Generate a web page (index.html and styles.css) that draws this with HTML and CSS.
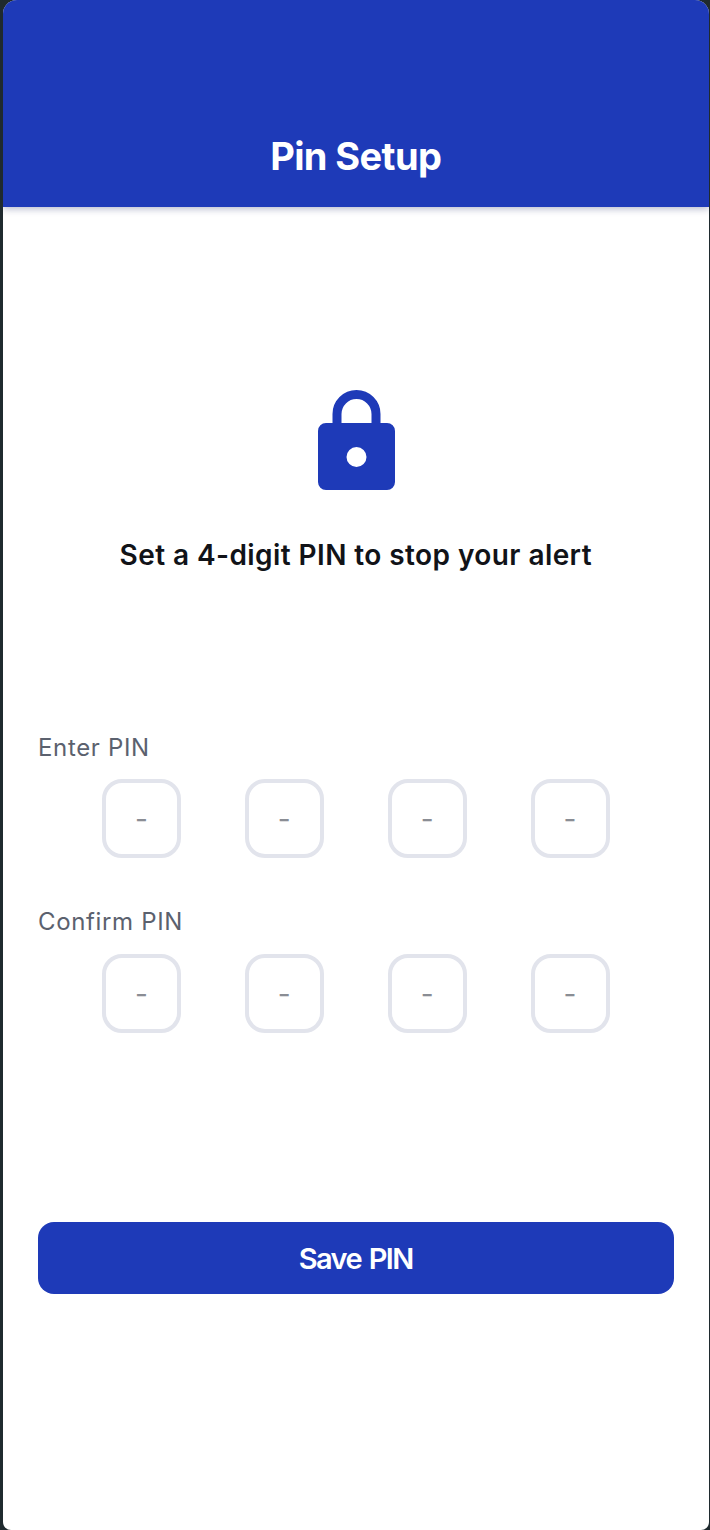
FILE: index.html
```html
<!DOCTYPE html>
<html lang="en">
<head>
<meta charset="utf-8">
<title>Pin Setup</title>
<link rel="stylesheet" href="styles.css">
</head>
<body>
<div class="screen">
  <header class="topbar"><h1 class="title">Pin Setup</h1></header>
  <main class="content">
    <section class="intro">
      <svg class="lock" width="77" height="101" viewBox="0 0 77 101" aria-hidden="true">
        <path class="lock-shackle" d="M19 38V24A19.500 19.500 0 0 1 58 24V38"/>
        <path class="lock-body" fill-rule="evenodd" d="M8 33H69A8 8 0 0 1 77 41V92A8 8 0 0 1 69 100H8A8 8 0 0 1 0 92V41A8 8 0 0 1 8 33ZM38.500 57A10 10 0 1 0 38.500 77A10 10 0 1 0 38.500 57Z"/>
      </svg>
      <p class="prompt">Set a 4-digit PIN to stop your alert</p>
    </section>
    <section class="pin-group pin-group-first">
      <div class="pin-label">Enter PIN</div>
      <div class="pin-row">
        <div class="pin-box">-</div><div class="pin-box">-</div><div class="pin-box">-</div><div class="pin-box">-</div>
      </div>
    </section>
    <section class="pin-group">
      <div class="pin-label">Confirm PIN</div>
      <div class="pin-row pin-row-last">
        <div class="pin-box">-</div><div class="pin-box">-</div><div class="pin-box">-</div><div class="pin-box">-</div>
      </div>
    </section>
    <button class="save" type="button">Save PIN</button>
  </main>
</div>
</body>
</html>
```

FILE: styles.css
```css
* { box-sizing: border-box; }
html, body { margin: 0; height: 100%; }
body {
  background: #1f2a2e;
  padding: 0 1px 0 2.5px;
  font-family: Inter, "Liberation Sans", sans-serif;
  overflow: hidden;
}
.screen {
  height: 1530px;
  background: #fff;
  border-radius: 14px 14px 8px 8px;
  overflow: hidden;
  display: flex;
  flex-direction: column;
}
.topbar {
  height: 207px;
  flex: none;
  background: #1e3ab8;
  box-shadow: 0 2px 7px rgba(30, 40, 100, 0.32);
  display: flex;
  align-items: flex-end;
  justify-content: center;
  padding-bottom: 28px;
}
.title {
  margin: 0;
  color: #fff;
  font-size: 38px;
  line-height: 46px;
  font-weight: 700;
  letter-spacing: -0.6px;
}
.content {
  padding: 183px 35.500px 0;
  display: flex;
  flex-direction: column;
}
.intro {
  display: flex;
  flex-direction: column;
  align-items: center;
}
.lock { display: block; margin-left: 1px; }
.lock-shackle { fill: none; stroke: #1e3ab8; stroke-width: 9; }
.lock-body { fill: #1e3ab8; }
.prompt {
  margin: 46px 0 0;
  color: #111318;
  font-size: 28px;
  line-height: 36px;
  font-weight: 600;
  letter-spacing: 0.42px;
  text-align: center;
}
.pin-group { margin-top: 48px; }
.pin-group-first { margin-top: 159px; }
.pin-label {
  color: #5b616e;
  font-size: 24px;
  line-height: 32px;
  font-weight: 400;
  letter-spacing: 0.65px;
}
.pin-row {
  margin-top: 15px;
  display: flex;
  justify-content: space-evenly;
}
.pin-row-last { margin-top: 16px; }
.pin-box {
  width: 79px;
  height: 79px;
  padding-top: 1px;
  border: 4px solid #e2e4ec;
  border-radius: 20px;
  display: flex;
  align-items: center;
  justify-content: center;
  color: #8a8d94;
  font-size: 28px;
}
.save {
  margin-top: 189px;
  height: 72px;
  padding-top: 2px;
  border: 0;
  border-radius: 16px;
  background: #1e3ab8;
  color: #fff;
  font-family: inherit;
  font-size: 29px;
  font-weight: 600;
  letter-spacing: -1.6px;
  word-spacing: 2px;
}
```
